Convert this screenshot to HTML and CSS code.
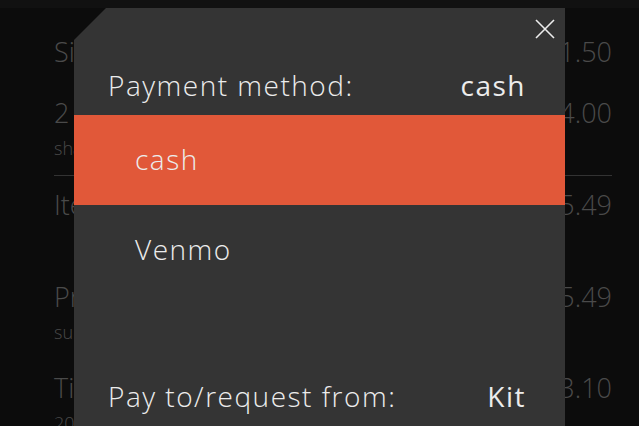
FILE: index.html
```html
<!DOCTYPE html>
<html lang="en">
<head>
    <meta charset="UTF-8">
    <title>Payment</title>
    <link rel="stylesheet" href="styles.css">
</head>
<body>
    <div class="topbar"><span class="title">Bagels</span><span class="title-right">)</span></div>
    <div class="list">
        <div class="row">
            <div class="row-main"><span>Single bagel</span><span class="amount">1.50</span></div>
        </div>
        <div class="row row-short">
            <div class="row-main"><span>2 coffees</span><span class="amount">4.00</span></div>
            <div class="row-sub">shared</div>
        </div>
        <div class="divider"></div>
        <div class="row row-tall">
            <div class="row-main"><span>Items total</span><span class="amount">5.49</span></div>
        </div>
        <div class="row">
            <div class="row-main"><span>Pretax total</span><span class="amount">5.49</span></div>
            <div class="row-sub">subtotal</div>
        </div>
        <div class="row">
            <div class="row-main"><span>Tip</span><span class="amount">3.10</span></div>
            <div class="row-sub">20%</div>
        </div>
    </div>

    <div class="modal">
        <button class="close" aria-label="Close">
            <svg width="20" height="20" viewBox="0 0 20 20"><path d="M1 1 L19 19 M19 1 L1 19" stroke="#ececec" stroke-width="1.6" fill="none"/></svg>
        </button>
        <div class="field">
            <span>Payment method:</span>
            <span class="value">cash</span>
        </div>
        <ul class="options">
            <li class="option selected">cash</li>
            <li class="option">Venmo</li>
        </ul>
        <div class="field">
            <span>Pay to/request from:</span>
            <span class="value">Kit</span>
        </div>
    </div>
</body>
</html>
```

FILE: styles.css
```css
body {
    margin: 0;
    background-color: #0c0c0c;
    font-family: "Open Sans", "Noto Sans", sans-serif;
    font-weight: 300;
    color: #4a4a4a;
    height: 426px;
    overflow: hidden;
}
.topbar {
    height: 8px;
    background-color: #111;
    display: flex;
    justify-content: space-between;
    padding: 0 82px 0 222px;
    font-size: 26px;
    line-height: 8px;
    overflow: hidden;
}
.title,
.title-right {
    margin-top: -21px;
}
.list {
    padding: 27px 27px 0 54px;
}
.row {
    padding-bottom: 28px;
}
.row:first-child {
    padding-bottom: 27px;
}
.row-short {
    padding-bottom: 16px;
}
.row-tall {
    padding-bottom: 58px;
}
.row-main {
    display: flex;
    justify-content: space-between;
    font-size: 27px;
    line-height: 34px;
}
.row-sub {
    font-size: 18px;
    line-height: 22px;
    margin-top: 7px;
}
.divider {
    height: 1px;
    background-color: #333;
    margin-bottom: 12px;
}
.modal {
    position: absolute;
    left: 74px;
    top: 8px;
    width: 491px;
    height: 418px;
    background-color: #343434;
    clip-path: polygon(32px 0, 100% 0, 100% 100%, 0 100%, 0 32px);
    color: #ececec;
    padding-top: 59px;
    box-sizing: border-box;
}
.close {
    position: absolute;
    right: 10px;
    top: 11px;
    background: none;
    border: none;
    padding: 0;
    width: 20px;
    height: 20px;
}
.field {
    display: flex;
    justify-content: space-between;
    padding: 0 39px 0 34px;
    font-size: 28px;
    line-height: 36px;
    letter-spacing: 1.5px;
}
.value {
    font-weight: 400;
}
.options {
    list-style: none;
    margin: 12px 0 83px 0;
    padding: 0;
}
.option {
    height: 90px;
    line-height: 88px;
    padding-left: 61px;
    font-size: 28px;
    letter-spacing: 1.5px;
}
.option.selected {
    background-color: #e15839;
}
```
